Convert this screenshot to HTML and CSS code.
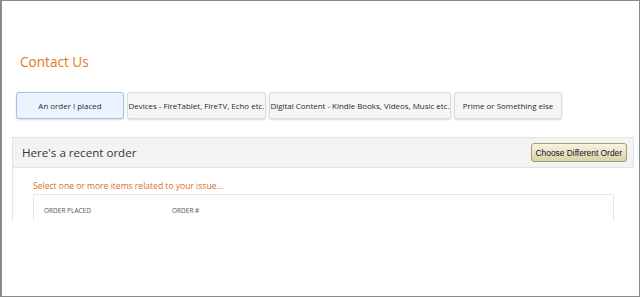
FILE: index.html
```html
<!DOCTYPE html>
<html lang="en">
<head>
    <meta charset="UTF-8">
    <meta name="viewport" content="width=device-width, initial-scale=1.0">
    <title>Contact Us</title>
    <link rel="stylesheet" href="styles.css">
</head>
<body>
    <div class="frame">
        <h1 class="title">Contact Us</h1>

        <div class="tabs">
            <button class="tab active">An order I placed</button>
            <button class="tab">Devices - FireTablet, FireTV, Echo etc.</button>
            <button class="tab">Digital Content - Kindle Books, Videos, Music etc.</button>
            <button class="tab">Prime or Something else</button>
        </div>

        <div class="panel">
            <div class="panel-head">
                <h2>Here's a recent order</h2>
                <button class="choose-btn">Choose Different Order</button>
            </div>
            <div class="panel-body">
                <p class="hint">Select one or more items related to your issue...</p>
                <div class="order-box">
                    <div class="order-cols">
                        <span class="col-placed">ORDER PLACED</span>
                        <span>ORDER #</span>
                    </div>
                </div>
            </div>
        </div>
    </div>
</body>
</html>
```

FILE: styles.css
```css
body {
    margin: 0;
    padding: 0;
    background-color: #ffffff;
    font-family: "Open Sans", Arial, sans-serif;
}
.frame {
    width: 640px;
    height: 297px;
    box-sizing: border-box;
    border: 1px solid #8a8a8a;
    border-left-width: 2px;
    padding-top: 51px;
    overflow: hidden;
}
.title {
    margin: 0 0 0 18px;
    font-size: 13.6px;
    line-height: 20px;
    font-weight: normal;
    color: #e47911; /* amazon orange */
}
.tabs {
    display: flex;
    gap: 3px;
    margin: 20px 0 0 14px;
}
.tab {
    min-width: 108px;
    height: 27px;
    box-sizing: border-box;
    padding: 0 0.5px;
    font-family: "Open Sans", Arial, sans-serif;
    font-size: 7.95px;
    color: #2b2b2b;
    background-color: #f6f6f6;
    border: 1px solid #dcdcdc;
    border-radius: 3px;
    box-shadow: 0 1px 2px rgba(0, 0, 0, 0.15);
    white-space: nowrap;
}
.tab.active {
    background-color: #eaf3fe; /* light blue */
    border-color: #a3c2e6;
}
.panel {
    margin: 18px 5px 0 10px;
}
.panel-head {
    display: flex;
    align-items: center;
    justify-content: space-between;
    height: 31px;
    box-sizing: border-box;
    padding: 0 6px 0 9px;
    background-color: #f3f3f3;
    border: 1px solid #e3e3e3;
}
.panel-head h2 {
    margin: 0;
    font-size: 11.6px;
    font-weight: normal;
    color: #333;
}
.choose-btn {
    height: 19px;
    padding: 0 4px;
    font-family: "Liberation Sans", Arial, sans-serif;
    font-size: 8.4px;
    color: #111133;
    background: linear-gradient(#f8f4de, #d9d2a8);
    border: 1px solid #a29d72;
    border-radius: 3px;
}
.panel-body {
    height: 53px;
    overflow: hidden;
    padding: 0 20px;
    border-left: 1px solid #e7e7e7;
}
.hint {
    margin: 0;
    padding-top: 11px;
    font-size: 8.55px;
    line-height: 14px;
    color: #dd6b1c;
}
.order-box {
    height: 60px;
    margin-top: 1px;
    border: 1px solid #e7e7e7;
}
.order-cols {
    display: flex;
    padding: 11px 0 0 10px;
    font-size: 6.5px;
    color: #555;
}
.col-placed {
    width: 128px;
}
```
